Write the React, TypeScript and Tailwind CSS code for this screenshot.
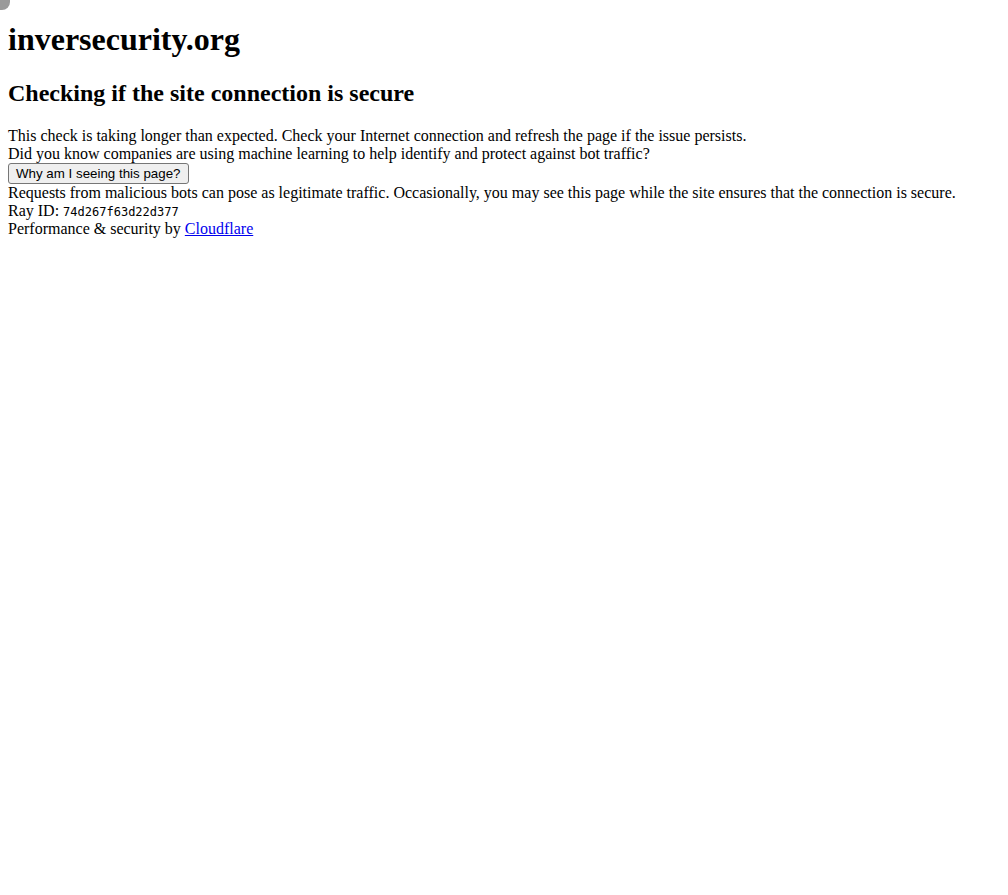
export default function App() {
  return (
    <div className="min-h-screen bg-white text-black font-['Liberation_Serif','Times_New_Roman',serif] leading-[normal]">
      <div className="fixed left-0 top-0 w-[10px] h-[10px] bg-[#9a9a9a] rounded-br-[8px]" />
      <div className="mx-2">
        <h1 className="text-[32px] font-bold my-[21.44px]">inversecurity.org</h1>
        <h2 className="text-[24px] font-bold my-[19.92px]">Checking if the site connection is secure</h2>
        <div className="text-[16px]">
          <div>This check is taking longer than expected. Check your Internet connection and refresh the page if the issue persists.</div>
          <div>Did you know companies are using machine learning to help identify and protect against bot traffic?</div>
          <button className="block font-['Liberation_Sans',Arial,sans-serif] text-[13.33px] leading-[normal] pl-[7px] pr-[8px] py-[2px] bg-[#efefef] border border-[#767676] rounded-[3px] text-black">
            Why am I seeing this page?
          </button>
          <div>Requests from malicious bots can pose as legitimate traffic. Occasionally, you may see this page while the site ensures that the connection is secure.</div>
          <div>
            Ray ID: <code className="font-['DejaVu_Sans_Mono',monospace] text-[12px]">74d267f63d22d377</code>
          </div>
          <div>
            Performance &amp; security by{" "}
            <a href="#" className="text-[#0000ee] underline">Cloudflare</a>
          </div>
        </div>
      </div>
    </div>
  );
}
